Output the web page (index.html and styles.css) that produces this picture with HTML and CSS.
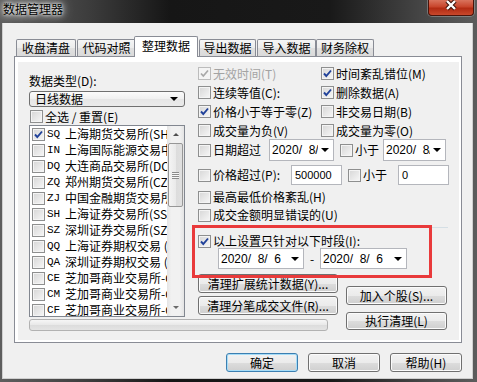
FILE: index.html
```html
<!DOCTYPE html>
<html lang="zh-CN">
  <head>
    <meta charset="UTF-8">
    <title>数据管理器</title>
    <link rel="stylesheet" href="styles.css">
  </head>
  <body>
    <div class="window">
      <div class="titlebar">
        <span class="title">数据管理器</span>
        <span class="close">
          <svg width="14" height="11" viewBox="0 0 14 11"><path d="M3 1L11 9M11 1L3 9" stroke="#3b120a" stroke-width="4.4"/><path d="M3 1L11 9M11 1L3 9" stroke="#fff" stroke-width="2.4"/></svg>
        </span>
      </div>

      <div class="client">
        <div class="tabs">
          <div class="tab t1">收盘清盘</div>
          <div class="tab t2">代码对照</div>
          <div class="tab active">整理数据</div>
          <div class="tab t4">导出数据</div>
          <div class="tab t5">导入数据</div>
          <div class="tab t6">财务除权</div>
        </div>

        <div class="panel">
          <div class="page">
            <!-- left: market list -->
            <div class="left">
              <div class="lbl">数据类型(D):</div>
              <div class="combo"><span>日线数据</span><span class="arrow"></span></div>
              <div class="chk all"><span class="cb"></span><span>全选 / 重置(E)</span></div>
              <div class="list">
                <div class="items">
                  <div class="item"><span class="cb"><svg width="11" height="11" viewBox="0 0 11 11"><path d="M2 5.5L4.3 8L9 2.5" fill="none" stroke="#21429a" stroke-width="1.9"/></svg></span><span class="code">SQ</span><span>上海期货交易所(SHFE)</span></div>
                  <div class="item"><span class="cb"></span><span class="code">IN</span><span>上海国际能源交易中心</span></div>
                  <div class="item"><span class="cb"></span><span class="code">DQ</span><span>大连商品交易所(DCE)</span></div>
                  <div class="item"><span class="cb"></span><span class="code">ZQ</span><span>郑州期货交易所(CZCE)</span></div>
                  <div class="item"><span class="cb"></span><span class="code">ZJ</span><span>中国金融期货交易所</span></div>
                  <div class="item"><span class="cb"></span><span class="code">SH</span><span>上海证券交易所(SSE)</span></div>
                  <div class="item"><span class="cb"></span><span class="code">SZ</span><span>深圳证券交易所(SZSE)</span></div>
                  <div class="item"><span class="cb"></span><span class="code">QQ</span><span>上海证券期权交易 (SSE)</span></div>
                  <div class="item"><span class="cb"></span><span class="code">QA</span><span>深圳证券期权交易 (SZSE)</span></div>
                  <div class="item"><span class="cb"></span><span class="code">CE</span><span>芝加哥商业交易所-CBOT</span></div>
                  <div class="item"><span class="cb"></span><span class="code">CM</span><span>芝加哥商业交易所-CME</span></div>
                  <div class="item"><span class="cb"></span><span class="code">CF</span><span>芝加哥商业交易所-COMEX</span></div>
                </div>
                <div class="vscroll">
                  <div class="sbtn"><span class="up"></span></div>
                  <div class="thumb"><span class="grip"></span></div>
                  <div class="track"></div>
                  <div class="sbtn"><span class="down"></span></div>
                </div>
              </div>
              <div class="progress"></div>
            </div>

            <!-- right: options -->
            <div class="right">
              <div class="grid">
                <div class="chk off"><span class="cb"><svg width="11" height="11" viewBox="0 0 11 11"><path d="M2 5.5L4.3 8L9 2.5" fill="none" stroke="#a8a8a8" stroke-width="1.7"/></svg></span><span>无效时间(T)</span></div>
                <div class="chk"><span class="cb"><svg width="11" height="11" viewBox="0 0 11 11"><path d="M2 5.5L4.3 8L9 2.5" fill="none" stroke="#21429a" stroke-width="1.9"/></svg></span><span>时间紊乱错位(M)</span></div>
                <div class="chk"><span class="cb"></span><span>连续等值(C):</span></div>
                <div class="chk"><span class="cb"><svg width="11" height="11" viewBox="0 0 11 11"><path d="M2 5.5L4.3 8L9 2.5" fill="none" stroke="#21429a" stroke-width="1.9"/></svg></span><span>删除数据(A)</span></div>
                <div class="chk"><span class="cb"><svg width="11" height="11" viewBox="0 0 11 11"><path d="M2 5.5L4.3 8L9 2.5" fill="none" stroke="#21429a" stroke-width="1.9"/></svg></span><span>价格小于等于零(Z)</span></div>
                <div class="chk"><span class="cb"></span><span>非交易日期(B)</span></div>
                <div class="chk"><span class="cb"></span><span>成交量为负(V)</span></div>
                <div class="chk"><span class="cb"></span><span>成交量为零(O)</span></div>
              </div>

              <div class="daterow">
                <div class="chk w71"><span class="cb"></span><span>日期超过</span></div>
                <div class="dt w65"><span class="dtv">2020/&nbsp;&nbsp;8/&nbsp;&nbsp;6</span><span class="dd"></span></div>
                <div class="chk w43"><span class="cb"></span><span>小于</span></div>
                <div class="dt w63"><span class="dtv">2020/&nbsp;&nbsp;8/&nbsp;&nbsp;6</span><span class="dd"></span></div>
              </div>

              <div class="pricerow">
                <div class="chk w93"><span class="cb"></span><span>价格超过(P):</span></div>
                <div class="edit">500000</div>
                <div class="chk w50"><span class="cb"></span><span>小于</span></div>
                <div class="edit">0</div>
              </div>

              <div class="chk row"><span class="cb"></span><span>最高最低价格紊乱(H)</span></div>
              <div class="chk row"><span class="cb"></span><span>成交金额明显错误的(U)</span></div>

              <div class="group">
                <div class="chk grow"><span class="cb"><svg width="11" height="11" viewBox="0 0 11 11"><path d="M2 5.5L4.3 8L9 2.5" fill="none" stroke="#21429a" stroke-width="1.9"/></svg></span><span>以上设置只针对以下时段(I):</span></div>
                <div class="range">
                  <div class="dt w86"><span class="dtv">2020/&nbsp;&nbsp;8/&nbsp;&nbsp;6</span><span class="dd"></span></div>
                  <span class="dash">-</span>
                  <div class="dt w87"><span class="dtv">2020/&nbsp;&nbsp;8/&nbsp;&nbsp;6</span><span class="dd"></span></div>
                </div>
                <div class="mark"></div>
              </div>

              <div class="actions">
                <div class="stack wide">
                  <div class="btn">清理扩展统计数据(Y)...</div>
                  <div class="btn">清理分笔成交文件(R)...</div>
                </div>
                <div class="stack narrow">
                  <div class="btn">加入个股(S)...</div>
                  <div class="btn">执行清理(L)</div>
                </div>
              </div>
            </div>
          </div>
        </div>

        <div class="footer">
          <div class="btn default">确定</div>
          <div class="btn">取消</div>
          <div class="btn">帮助(H)</div>
        </div>
      </div>
    </div>
  </body>
</html>
```

FILE: styles.css
```css
body {
  margin: 0;
  font-family: "Noto Sans CJK SC", sans-serif;
  font-size: 12px;
  line-height: 14px;
  color: #000;
  background: #1e1e1e;
}

.window {
  width: 477px;
  height: 382px;
  display: flex;
  flex-direction: column;
  background: linear-gradient(90deg, #5e5e5e 0, #3c3c3c 90px, #161616 170px, #191919 330px, #454545 420px, #5c5c5c 100%);
}

/* title bar */
.titlebar {
  height: 23px;
  flex-shrink: 0;
  display: flex;
}

.title {
  padding: 2px 0 0 3px;
  text-shadow: 0 0 3px #fff, 0 0 7px #fff, 0 0 12px rgba(255, 255, 255, 0.8);
}

.close {
  margin-left: auto;
  margin-right: 3px;
  width: 46px;
  height: 16px;
  box-sizing: border-box;
  display: flex;
  justify-content: center;
  align-items: flex-start;
  border: 1px solid #4a140b;
  border-top: none;
  border-radius: 0 0 4px 4px;
  background: linear-gradient(#d9735d 0%, #c8452c 45%, #b22b13 55%, #c9482c 100%);
  box-shadow: 0 0 0 1px rgba(255, 255, 255, 0.25);
}

/* client area */
.client {
  flex: 1;
  margin: 0 4px 3px 2px;
  border: 1px solid #cfcfcf;
  border-top: none;
  background: #f0f0f0;
  display: flex;
  flex-direction: column;
}

.tabs {
  display: flex;
  align-items: flex-end;
  height: 20px;
  margin: 13px 0 0 13px;
}

.tab {
  box-sizing: border-box;
  height: 17px;
  border: 1px solid #898c95;
  border-bottom: none;
  border-radius: 2px 2px 0 0;
  background: linear-gradient(#f5f5f5, #ececec 50%, #e0e0e0 51%, #dadada);
  text-align: center;
  line-height: 16px;
  white-space: nowrap;
}

.t1 { width: 60px; }
.t2 { width: 59px; margin-left: 1px; }
.t4 { width: 57px; }
.t5 { width: 59px; margin-left: 1px; }
.t6 { width: 58px; }

.tab.active {
  position: relative;
  z-index: 1;
  width: 64px;
  height: 21px;
  margin: 0 1px -1px -2px;
  background: #fff;
  line-height: 18px;
}

.panel {
  box-sizing: border-box;
  width: 448px;
  height: 287px;
  margin-left: 11px;
  border: 1px solid #898c95;
  background: #fff;
  display: flex;
}

.page {
  flex: 1;
  margin: 5px 2px 2px 3px;
  background: #f0f0f0;
  display: flex;
}

/* checkboxes */
.chk {
  display: flex;
  align-items: center;
  gap: 2px;
  white-space: nowrap;
}

.cb {
  box-sizing: border-box;
  width: 13px;
  height: 13px;
  flex-shrink: 0;
  display: flex;
  justify-content: center;
  align-items: center;
  border: 1px solid #8e8f8f;
  background: linear-gradient(135deg, #d6d6d6, #f7f7f7);
  box-shadow: inset 0 0 0 1px #f4f4f4;
}

.chk.off { color: #a3a3a3; }
.chk.off .cb { border-color: #bcbcbc; background: #f4f4f4; }

/* left column */
.left {
  width: 156px;
  margin-left: 11px;
  padding-top: 12px;
}

.combo {
  box-sizing: border-box;
  height: 16px;
  margin-top: 3px;
  padding: 0 6px 0 5px;
  display: flex;
  align-items: center;
  justify-content: space-between;
  border: 1px solid #707070;
  border-radius: 3px;
  background: linear-gradient(#fbfbfb, #f0f0f0 50%, #e6e6e6 51%, #ebebeb);
}

.arrow, .dd {
  width: 0;
  height: 0;
  border-left: 4px solid transparent;
  border-right: 4px solid transparent;
  border-top: 4px solid #000;
}

.all {
  height: 13px;
  margin: 3px 0 0 1px;
}

.list {
  box-sizing: border-box;
  height: 192px;
  margin-top: 2px;
  border: 1px solid #828790;
  background: #fff;
  display: flex;
}

.items {
  width: 137px;
  overflow: hidden;
}

.item {
  height: 16px;
  padding-left: 2px;
  display: flex;
  align-items: center;
  white-space: nowrap;
}

.code {
  width: 18px;
  margin-left: 2px;
  flex-shrink: 0;
  font-family: "Liberation Mono", monospace;
  font-size: 11px;
}

.vscroll {
  width: 17px;
  display: flex;
  flex-direction: column;
  background: linear-gradient(90deg, #e4e4e4, #f1f1f1 25%, #f1f1f1 75%, #e4e4e4);
}

.sbtn {
  height: 17px;
  flex-shrink: 0;
  display: flex;
  justify-content: center;
  align-items: center;
}

.up, .down {
  width: 0;
  height: 0;
  border-left: 3px solid transparent;
  border-right: 3px solid transparent;
}

.up { border-bottom: 3px solid #505050; }
.down { border-top: 3px solid #6a6a6a; }

.thumb {
  box-sizing: border-box;
  height: 64px;
  margin: 0 1px;
  display: flex;
  justify-content: center;
  align-items: center;
  border: 1px solid #979797;
  border-radius: 2px;
  background: linear-gradient(90deg, #f4f4f4, #eaeaea 50%, #dcdcdc 51%, #e0e0e0);
}

.grip {
  width: 7px;
  height: 7px;
  background: repeating-linear-gradient(#8c8c8c 0 1px, #f8f8f8 1px 2px);
}

.track { flex: 1; }

.progress {
  box-sizing: border-box;
  width: 299px;
  height: 12px;
  margin-top: 2px;
  border: 1px solid #b2b2b2;
  border-radius: 3px;
  background: linear-gradient(#f6f6f6, #e8e8e8 50%, #dcdcdc 51%, #e4e4e4);
}

/* right column */
.right {
  margin-left: 13px;
  padding-top: 2px;
  flex: 1;
}

.grid {
  display: grid;
  grid-template-columns: 123px 1fr;
  grid-auto-rows: 19px;
}

.daterow, .pricerow {
  display: flex;
  align-items: center;
}

.daterow { height: 22px; margin-top: -1px; }
.pricerow { height: 20px; margin-top: 4px; }

.w71 { width: 71px; }
.w43 { width: 43px; margin-left: 6px; }
.w93 { width: 93px; }
.w50 { width: 50px; margin-left: 6px; }

.dt {
  box-sizing: border-box;
  height: 22px;
  padding: 0 4px 0 2px;
  display: flex;
  align-items: center;
  border: 1px solid #b4b6bc;
  background: #fff;
  font-family: "Liberation Sans", sans-serif;
  font-size: 12px;
}

.dtv {
  flex: 1;
  overflow: hidden;
  white-space: nowrap;
}

.dd { margin-left: 3px; flex-shrink: 0; }

.w65 { width: 65px; }
.w63 { width: 63px; }
.w86 { width: 86px; height: 21px; }
.w87 { width: 87px; height: 21px; }

.edit {
  box-sizing: border-box;
  width: 51px;
  height: 20px;
  padding-left: 3px;
  display: flex;
  align-items: center;
  border: 1px solid #b4b6bc;
  background: #fff;
  font-family: "Liberation Sans", sans-serif;
  font-size: 11px;
}

.row {
  height: 18px;
}

.row:first-of-type { margin-top: 3px; }

.pricerow + .row { margin-top: 3px; }

.group {
  position: relative;
  width: 254px;
  margin: 3px 0 0 -4px;
  padding: 6px 0 0 4px;
  box-sizing: border-box;
  border-top: 1px solid #d5dfe5;
}

.grow { height: 14px; }

.range {
  height: 21px;
  padding-left: 20px;
  display: flex;
  align-items: center;
}

.dash {
  width: 16px;
  text-align: center;
}

/* red annotation frame over the period group */
.mark {
  position: absolute;
  z-index: 2;
  left: -2px;
  top: -3px;
  width: 240px;
  height: 53px;
  box-sizing: border-box;
  border: 3px solid #e93a3b;
}

.actions {
  display: flex;
  margin-top: 5px;
}

.stack {
  display: flex;
  flex-direction: column;
}

.stack.wide { width: 140px; gap: 3px; }
.stack.narrow { width: 101px; margin: 12px 0 0 8px; gap: 7px; }

.btn {
  box-sizing: border-box;
  height: 19px;
  display: flex;
  justify-content: center;
  align-items: center;
  white-space: nowrap;
  border: 1px solid #707070;
  border-radius: 3px;
  background: linear-gradient(#f2f2f2, #ebebeb 50%, #dddddd 51%, #cfcfcf);
  box-shadow: inset 0 0 0 1px #fbfbfb;
}

.stack.narrow .btn:last-child { height: 18px; }

.footer {
  display: flex;
  justify-content: flex-end;
  gap: 10px;
  margin: 10px 10px 0 0;
}

.footer .btn { width: 72px; }

.btn.default {
  border-color: #3c7fb1;
  box-shadow: inset 0 0 0 1px #a6dcf7;
}
```
